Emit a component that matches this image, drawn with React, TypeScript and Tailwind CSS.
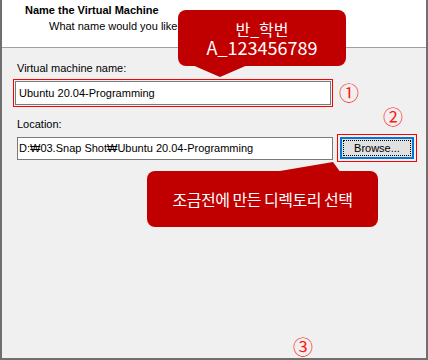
import React from "react";

const sys = { fontFamily: '"Liberation Sans", Arial, sans-serif' };
const kr = { fontFamily: '"Noto Sans CJK KR", "Noto Sans", sans-serif' };

function Marker({ n, className }: { n: string; className: string }) {
  return (
    <span
      className={`absolute text-[20px] leading-[20px] text-[#ff1a1a] ${className}`}
      style={kr}
    >
      {n}
    </span>
  );
}

export default function App() {
  return (
    <div className="relative w-[428px] h-[360px] overflow-hidden bg-white">
      <div
        className="flex flex-col w-[428px] h-[360px] border-x-2 border-b-2 border-[#6f6f6f]"
        style={sys}
      >
        {/* header */}
        <div className="h-[48px] bg-white border-b border-[#a0a0a0] pt-[4px] pl-[23px] text-[11px] leading-[13px] text-black">
          <p className="font-bold">Name the Virtual Machine</p>
          <p className="pl-[24px] mt-[3px]">What name would you like to use for this machine?</p>
        </div>

        {/* body */}
        <div className="flex-1 bg-[#f0f0f0] pl-[11px] pt-[14px] text-[11px] leading-[13px] text-black">
          <p className="pl-[4px]">Virtual machine name:</p>
          <div className="mt-[4px] w-[320px] h-[28px] border border-[#ff0000] p-[1px]">
            <div className="h-full bg-white border border-[#7a7a7a] pl-[3px] flex items-center">
              Ubuntu 20.04-Programming
            </div>
          </div>

          <p className="pl-[4px] mt-[11px]">Location:</p>
          <div className="mt-[3px] flex items-center">
            <div className="ml-[4px] w-[316px] h-[23px] bg-white border border-[#7a7a7a] pl-[1px] flex items-center whitespace-nowrap overflow-hidden">
              D:₩03.Snap Shot₩Ubuntu 20.04-Programming
            </div>
            <div className="ml-[4px] w-[80px] h-[28px] border border-[#ff0000] p-[2px]">
              <div className="h-full border-2 border-[#0078d7] bg-[#e1e1e1] p-[1px]">
                <div className="h-full border border-dotted border-black flex items-center justify-center">
                  Browse...
                </div>
              </div>
            </div>
          </div>
        </div>
      </div>

      {/* callout 1 */}
      <div className="absolute left-[178px] top-[10px] w-[168px] h-[56px] rounded-[8px] bg-[#c00000] flex flex-col items-center justify-center text-white leading-[18px]" style={kr}>
        <span className="text-[16px]">반_학번</span>
        <span className="text-[18px]">A_123456789</span>
      </div>
      <svg className="absolute left-0 top-0" width="428" height="360">
        <polygon points="190,64 250,64 220,77" fill="#c00000" />
        <polygon points="268,173 333,162 341,173" fill="#c00000" />
      </svg>

      {/* callout 2 */}
      <div className="absolute left-[147px] top-[171px] w-[231px] h-[56px] rounded-[8px] bg-[#c00000] flex items-center justify-center text-white text-[16px] tracking-[-0.5px]" style={kr}>
        조금전에 만든 디렉토리 선택
      </div>

      <Marker n="①" className="left-[339px] top-[83px]" />
      <Marker n="②" className="left-[383px] top-[107px]" />
      <Marker n="③" className="left-[293px] top-[337px]" />
    </div>
  );
}
